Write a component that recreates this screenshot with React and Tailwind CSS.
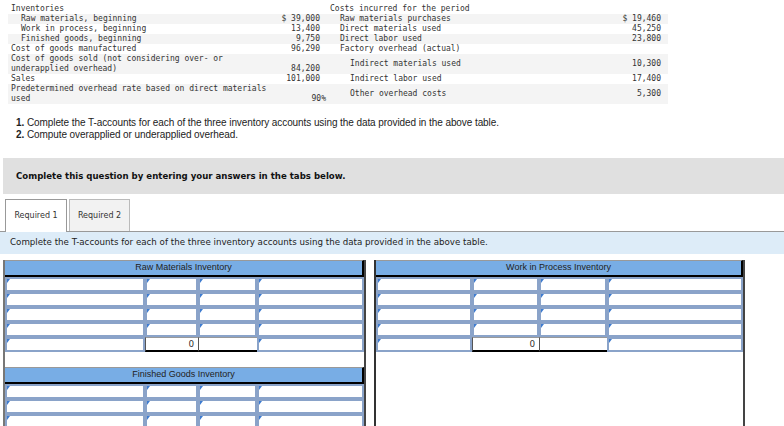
const data = [
  { a: "Inventories", ai: 0, av: "", b: "Costs incurred for the period", bi: 0, bv: "", h: 1 },
  { a: "Raw materials, beginning", ai: 1, av: "$ 39,000", b: "Raw materials purchases", bi: 1, bv: "$ 19,460", h: 1 },
  { a: "Work in process, beginning", ai: 1, av: "13,400", b: "Direct materials used", bi: 1, bv: "45,250", h: 1 },
  { a: "Finished goods, beginning", ai: 1, av: "9,750", b: "Direct labor used", bi: 1, bv: "23,800", h: 1 },
  { a: "Cost of goods manufactured", ai: 0, av: "96,290", b: "Factory overhead (actual)", bi: 1, bv: "", h: 1 },
  { a: "Cost of goods sold (not considering over- or underapplied overhead)", ai: 0, av: "84,200", b: "Indirect materials used", bi: 2, bv: "10,300", h: 2 },
  { a: "Sales", ai: 0, av: "101,000", b: "Indirect labor used", bi: 2, bv: "17,400", h: 1 },
  { a: "Predetermined overhead rate based on direct materials used", ai: 0, av: "90%", b: "Other overhead costs", bi: 2, bv: "5,300", h: 2 },
];

const indent = ["pl-[3px]", "pl-[13px]", "pl-[23px]"];
const indentR = ["pl-[4px]", "pl-[14px]", "pl-[24px]"];

function DataTable() {
  return (
    <div className="shrink-0 ml-[8px] mt-[4px] w-[660px] text-[8px] leading-[10px] text-[#333]" style={{ fontFamily: '"DejaVu Sans Mono", monospace' }}>
      {data.map((r, i) => (
        <div key={i} className={`grid grid-cols-[265px_53px_274px_68px] ${i % 2 === 1 ? "bg-[#f4f4f4]" : ""} ${r.h === 2 ? "h-[20px]" : "h-[10px]"}`}>
          <div className={`${indent[r.ai]} whitespace-normal`}>{r.a}</div>
          <div className={`flex items-end justify-end ${r.av === "90%" ? "pr-0" : "pr-[6px]"} whitespace-pre`}>{r.av}</div>
          <div className={`${indentR[r.bi]} flex items-center whitespace-nowrap`}>{r.b}</div>
          <div className="flex items-center justify-end pr-[7px] whitespace-pre">{r.bv}</div>
        </div>
      ))}
    </div>
  );
}

function Cell({ w, zero }) {
  if (zero) {
    return (
      <div style={{ width: w }} className="h-[15px] bg-white border-l border-[#555] border-t border-t-[#999] border-b-2 border-b-black flex items-center justify-end pr-[4px] text-[9px] text-[#222]">
        {zero === "0" ? "0" : ""}
      </div>
    );
  }
  return (
    <div style={{ width: w }} className="relative h-[15px] bg-white border-2 border-[#8aa3c9]">
      <div className="absolute top-0 left-0 w-0 h-0 border-t-[4px] border-t-[#3d7bd0] border-r-[3px] border-r-transparent" />
    </div>
  );
}

function TAccount({ title, cols, rows, zeroRow }) {
  return (
    <div>
      <div className="h-[17px] bg-[#78ade5] border-t border-t-[#999] border-b-2 border-b-black border-r-2 border-r-black flex items-center justify-center text-[9px] text-[#222]" style={{ fontFamily: '"Liberation Sans", Arial, sans-serif' }}>
        {title}
      </div>
      {Array.from({ length: rows }).map((_, ri) => {
        const isZero = zeroRow && ri === rows - 1;
        return (
          <div key={ri} className="flex">
            {cols.map((w, ci) => (
              <Cell key={ci} w={w} zero={isZero && (ci === 1 || ci === 2) ? (ci === 1 ? "0" : " ") : null} />
            ))}
          </div>
        );
      })}
    </div>
  );
}

export default function App() {
  const rmCols = ["140px", "53px", "59px", "107px"];
  const wipCols = ["96px", "67px", "68px", "136px"];
  return (
    <div className="w-[784px] h-[426px] overflow-hidden bg-white flex flex-col">
      <DataTable />

      <div className="shrink-0 ml-[16px] mt-[13px] text-[10px] leading-[12px] text-[#222]" style={{ fontFamily: '"Liberation Sans", Arial, sans-serif', letterSpacing: "-0.08px" }}>
        <div><span className="font-bold">1.</span> Complete the T-accounts for each of the three inventory accounts using the data provided in the above table.</div>
        <div><span className="font-bold">2.</span> Compute overapplied or underapplied overhead.</div>
      </div>

      <div className="shrink-0 ml-[3px] mt-[17px] h-[36px] bg-[#e0e0e0] flex items-center pl-[13px] text-[8.6px] font-bold text-[#111]" style={{ fontFamily: '"DejaVu Sans", Verdana, sans-serif' }}>
        Complete this question by entering your answers in the tabs below.
      </div>

      <div className="shrink-0 mt-[5px] flex items-end pl-[5px] border-b border-[#999] text-[8px] text-[#333]" style={{ fontFamily: '"DejaVu Sans", Verdana, sans-serif' }}>
        <div className="w-[62px] h-[33px] bg-white border border-[#999] border-b-0 -mb-px flex items-center justify-center">Required 1</div>
        <div className="ml-[2px] w-[61px] h-[32px] bg-[#f2f2f2] border border-[#bbb] border-b-0 flex items-center justify-center">Required 2</div>
      </div>

      <div className="shrink-0 h-[22px] bg-[#ddecf8] flex items-center pl-[10px] text-[8.7px] text-[#222]" style={{ fontFamily: '"DejaVu Sans", Verdana, sans-serif' }}>
        Complete the T-accounts for each of the three inventory accounts using the data provided in the above table.
      </div>

      <div className="mt-[6px] flex-1 min-h-0 flex items-stretch pl-[3px]">
        <div className="w-[363px] border-l-2 border-l-[#777] border-r-2 border-r-[#444]">
          <TAccount title="Raw Materials Inventory" cols={rmCols} rows={5} zeroRow />
          <div className="mt-[15px]">
            <TAccount title="Finished Goods Inventory" cols={rmCols} rows={4} zeroRow={false} />
          </div>
        </div>
        <div className="ml-[8px] w-[371px] border-l-2 border-l-[#333] border-r-2 border-r-[#444]">
          <TAccount title="Work in Process Inventory" cols={wipCols} rows={5} zeroRow />
        </div>
      </div>
    </div>
  );
}
